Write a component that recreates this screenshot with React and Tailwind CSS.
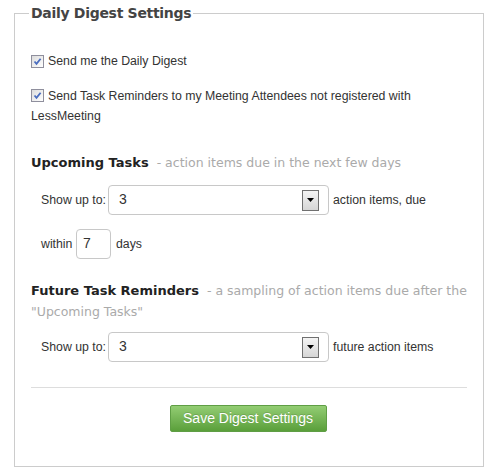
import React from "react";

function Check() {
  return (
    <span className="inline-flex items-center justify-center w-[13px] h-[13px] border border-[#8f8f9d] bg-gradient-to-br from-[#dcdcdc] to-[#ffffff] shrink-0">
      <svg width="9" height="9" viewBox="0 0 9 9">
        <path d="M1.5 4.5 L3.5 6.8 L7.6 1.8" fill="none" stroke="#4a6dbf" strokeWidth="1.8" />
      </svg>
    </span>
  );
}

function SelectBox() {
  return (
    <div className="relative w-[221px] h-[30px] border border-[#c8c8c8] rounded-[4px] bg-white flex items-center pl-[10px] text-[14px] text-[#333]">
      3
      <span className="absolute right-[9px] top-[4px] w-[17px] h-[21px] border border-[#707070] bg-gradient-to-b from-[#f4f4f4] to-[#d6d6d6] flex items-center justify-center">
        <svg width="7" height="4" viewBox="0 0 7 4">
          <path d="M0 0 H7 L3.5 4 Z" fill="#000" />
        </svg>
      </span>
    </div>
  );
}

export default function App() {
  const body = { fontFamily: '"Liberation Sans", Arial, sans-serif' };
  const verd = { fontFamily: '"DejaVu Sans", Verdana, sans-serif' };
  return (
    <div className="w-[495px] h-[476px] bg-white overflow-hidden pt-[4px]" style={body}>
      <fieldset className="ml-[14px] w-[470px] h-[463px] border border-[#cccccc] px-[16px]">
        <legend className="-ml-[2px] px-[2px] text-[14px] leading-[18px] font-bold text-[#444] tracking-[-0.3px]" style={verd}>
          Daily Digest Settings
        </legend>
        <div className="text-[12.3px] text-[#333]">
          <div className="mt-[29px] h-[20px] flex items-center gap-[4px]">
            <Check />
            <span>Send me the Daily Digest</span>
          </div>
          <div className="mt-[14px] leading-[20px]">
            <span className="inline-flex items-center gap-[4px] align-middle">
              <Check />
              <span>Send Task Reminders to my Meeting Attendees not registered with</span>
            </span>
            <br />
            LessMeeting
          </div>
          <div className="mt-[27px] leading-[20px] text-[13px] whitespace-nowrap" style={verd}>
            <span className="font-bold text-[#222]">Upcoming Tasks</span>
            <span className="text-[#aaaaaa] text-[12.5px]">&nbsp; - action items due in the next few days</span>
          </div>
          <div className="mt-[12px] ml-[10px] flex items-center h-[30px]">
            <span className="w-[67px]">Show up to:</span>
            <SelectBox />
            <span className="ml-[4px]">action items, due</span>
          </div>
          <div className="mt-[14px] ml-[10px] flex items-center h-[30px]">
            <span className="w-[35px]">within</span>
            <div className="w-[35px] h-[30px] border border-[#c8c8c8] rounded-[4px] flex items-center pl-[6px] text-[14px] text-[#333]">7</div>
            <span className="ml-[5px]">days</span>
          </div>
          <div className="mt-[21px] leading-[21px] text-[13px] whitespace-nowrap" style={verd}>
            <span className="font-bold text-[#222]">Future Task Reminders</span>
            <span className="text-[#aaaaaa] text-[12.5px]">&nbsp; - a sampling of action items due after the</span>
            <br />
            <span className="text-[#aaaaaa] text-[12.5px]">"Upcoming Tasks"</span>
          </div>
          <div className="mt-[10px] ml-[10px] flex items-center h-[30px]">
            <span className="w-[67px]">Show up to:</span>
            <SelectBox />
            <span className="ml-[4px]">future action items</span>
          </div>
          <div className="mt-[25px] w-[436px] h-px bg-[#dddddd]" />
          <div className="mt-[17px] flex justify-center pr-[2px]">
            <button className="w-[157px] h-[27px] rounded-[2px] border border-[#5f9e45] bg-gradient-to-b from-[#93cd73] to-[#5a9f3a] text-white text-[14px] leading-none [text-shadow:0_-1px_0_rgba(0,0,0,0.15)]">
              Save Digest Settings
            </button>
          </div>
        </div>
      </fieldset>
    </div>
  );
}
